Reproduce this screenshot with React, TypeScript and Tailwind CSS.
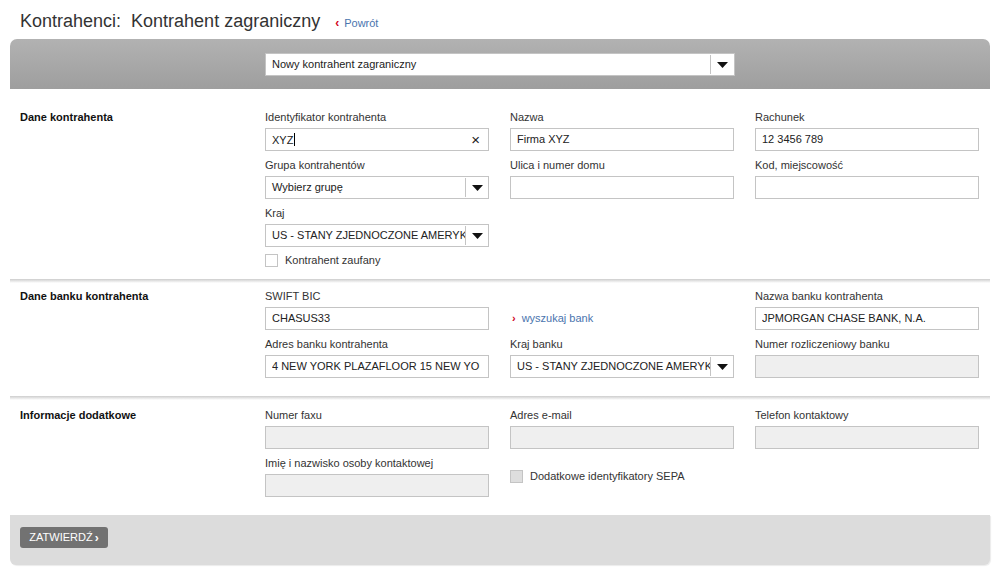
import React from "react";

const font = "font-['Liberation_Sans',Arial,sans-serif]";

function Arrow() {
  return (
    <svg width="11" height="6" viewBox="0 0 11 6" className="block">
      <path d="M0 0h11L5.5 6z" fill="#111" />
    </svg>
  );
}

function TextInput({ value, disabled, clear, caret }: { value?: string; disabled?: boolean; clear?: boolean; caret?: boolean }) {
  return (
    <div
      className={`flex h-[23px] items-center overflow-hidden border border-[#c4c4c4] pl-[6px] pr-[8px] text-[11px] text-[#222] ${
        disabled ? "bg-[#efefef]" : "bg-white"
      }`}
    >
      <span className="flex-1 overflow-hidden whitespace-nowrap">
        {value}
        {caret && <span className="ml-px inline-block h-[13px] w-px translate-y-[2px] bg-black" />}
      </span>
      {clear && <span className="text-[15px] leading-none text-[#222]">×</span>}
    </div>
  );
}

function Select({ value, wide }: { value: string; wide?: boolean }) {
  return (
    <div className="flex h-[23px] items-stretch border border-[#c4c4c4] bg-white text-[11px] text-[#222]">
      <span className="flex flex-1 items-center overflow-hidden whitespace-nowrap pl-[6px]">{value}</span>
      <span className={`my-px border-l border-[#c4c4c4] ${wide ? "w-[24px]" : "w-[23px]"} flex items-center justify-center`}>
        <Arrow />
      </span>
    </div>
  );
}

function Checkbox({ label, disabled }: { label: string; disabled?: boolean }) {
  return (
    <label className="flex h-[13px] items-center gap-[7px] text-[11px] text-[#333]">
      <span className={`h-[13px] w-[13px] border border-[#c4c4c4] ${disabled ? "bg-[#dedede]" : "bg-white"}`} />
      {label}
    </label>
  );
}

function Field({ label, children }: { label?: string; children: React.ReactNode }) {
  return (
    <div>
      <div className="mb-[4px] h-[14px] text-[11px] leading-[14px] text-[#333]">{label}</div>
      {children}
    </div>
  );
}

function Section({ title, pt, pb, cols }: { title: string; pt: string; pb: string; cols: React.ReactNode[] }) {
  return (
    <div className={`flex bg-white ${pt} ${pb}`}>
      <div className="w-[255px] pl-[10px] text-[11px] font-bold leading-[14px] text-[#111]">{title}</div>
      <div className="grid grid-cols-[224px_224px_224px] gap-x-[21px]">
        {cols.map((c, i) => (
          <div key={i} className="flex flex-col gap-[7px]">
            {c}
          </div>
        ))}
      </div>
    </div>
  );
}

function Separator() {
  return <div className="h-[4px] bg-linear-to-b from-[#cdcdcd] to-white" />;
}

export default function App() {
  return (
    <div className={`${font} h-[575px] w-[994px] bg-white`}>
      <div className="flex h-[39px] items-baseline pl-[20px] pt-[10px]">
        <h1 className="text-[18px] leading-[22px] text-[#333]">Kontrahenci:&nbsp; Kontrahent zagraniczny</h1>
        <a className="ml-[15px] flex items-baseline gap-[5px] text-[11px] text-[#4a74ae]">
          <span className="text-[12px] font-bold text-[#d0021b]">‹</span>
          Powrót
        </a>
      </div>

      <div className="mx-[10px] w-[980px]">
        <div className="h-[50px] rounded-t-[7px] bg-linear-to-b from-[#b2b2b2] to-[#9e9e9e] pl-[255px] pt-[14px]">
          <div className="w-[470px]">
            <Select value="Nowy kontrahent zagraniczny" wide />
          </div>
        </div>

        <Section
          title="Dane kontrahenta"
          pt="pt-[21px]"
          pb="pb-[12px]"
          cols={[
            <>
              <Field label="Identyfikator kontrahenta">
                <TextInput value="XYZ" clear caret />
              </Field>
              <Field label="Grupa kontrahentów">
                <Select value="Wybierz grupę" />
              </Field>
              <Field label="Kraj">
                <Select value="US - STANY ZJEDNOCZONE AMERYKI PÓŁNOCNE" />
              </Field>
              <Checkbox label="Kontrahent zaufany" />
            </>,
            <>
              <Field label="Nazwa">
                <TextInput value="Firma XYZ" />
              </Field>
              <Field label="Ulica i numer domu">
                <TextInput />
              </Field>
            </>,
            <>
              <Field label="Rachunek">
                <TextInput value="12 3456 789" />
              </Field>
              <Field label="Kod, miejscowość">
                <TextInput />
              </Field>
            </>,
          ]}
        />
        <Separator />

        <Section
          title="Dane banku kontrahenta"
          pt="pt-[6px]"
          pb="pb-[18px]"
          cols={[
            <>
              <Field label="SWIFT BIC">
                <TextInput value="CHASUS33" />
              </Field>
              <Field label="Adres banku kontrahenta">
                <TextInput value="4 NEW YORK PLAZAFLOOR 15 NEW YORK NY 10004" />
              </Field>
            </>,
            <>
              <Field>
                <a className="flex h-[23px] items-center gap-[6px] pl-[2px] text-[11px] text-[#4a74ae]">
                  <span className="font-bold text-[#d0021b]">›</span>
                  wyszukaj bank
                </a>
              </Field>
              <Field label="Kraj banku">
                <Select value="US - STANY ZJEDNOCZONE AMERYKI PÓŁNOCNE" />
              </Field>
            </>,
            <>
              <Field label="Nazwa banku kontrahenta">
                <TextInput value="JPMORGAN CHASE BANK, N.A." />
              </Field>
              <Field label="Numer rozliczeniowy banku">
                <TextInput disabled />
              </Field>
            </>,
          ]}
        />
        <Separator />

        <Section
          title="Informacje dodatkowe"
          pt="pt-[8px]"
          pb="pb-[18px]"
          cols={[
            <>
              <Field label="Numer faxu">
                <TextInput disabled />
              </Field>
              <Field label="Imię i nazwisko osoby kontaktowej">
                <TextInput disabled />
              </Field>
            </>,
            <>
              <Field label="Adres e-mail">
                <TextInput disabled />
              </Field>
              <div className="mt-[14px]">
                <Checkbox label="Dodatkowe identyfikatory SEPA" disabled />
              </div>
            </>,
            <>
              <Field label="Telefon kontaktowy">
                <TextInput disabled />
              </Field>
            </>,
          ]}
        />

        <div className="h-[50px] rounded-b-[6px] bg-[#dcdcdc] pl-[10px] pt-[12px] shadow-[1px_1px_1px_rgba(0,0,0,0.08)]">
          <button className="flex h-[21px] w-[88px] items-center justify-center gap-[2px] rounded-[3px] bg-[#727272] text-[11px] text-white">
            ZATWIERDŹ
            <span className="text-[12px] font-bold leading-none">›</span>
          </button>
        </div>
      </div>
    </div>
  );
}
